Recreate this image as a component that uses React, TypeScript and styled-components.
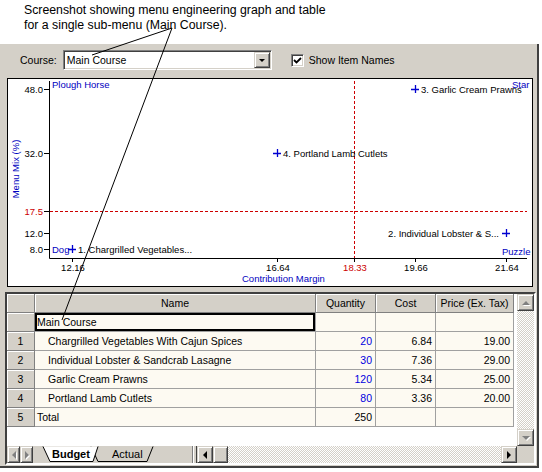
import React from 'react';
import styled, { createGlobalStyle } from 'styled-components';

// Global reset
const GlobalStyle = createGlobalStyle`
  html, body {
    margin: 0;
    padding: 0;
    background: #fff;
  }
  body {
    font-family: "Liberation Sans", Arial, sans-serif;
  }
`;

const FACE = '#d4d0c8';
const SHADOW = '#808080';
const DARK = '#404040';

// Data
interface MenuItem {
  id: number;
  name: string;
  qty: number;
  cost: string;
  price: string;
  label: string;
  margin: number;
  mix: number;
  side: 'left' | 'right';
}

const items: MenuItem[] = [
  { id: 1, name: 'Chargrilled Vegetables With Cajun Spices', qty: 20, cost: '6.84', price: '19.00', label: '1. Chargrilled Vegetables...', margin: 12.16, mix: 8.0, side: 'right' },
  { id: 2, name: 'Individual Lobster & Sandcrab Lasagne', qty: 30, cost: '7.36', price: '29.00', label: '2. Individual Lobster & S...', margin: 21.64, mix: 12.0, side: 'left' },
  { id: 3, name: 'Garlic Cream Prawns', qty: 120, cost: '5.34', price: '25.00', label: '3. Garlic Cream Prawns', margin: 19.66, mix: 48.0, side: 'right' },
  { id: 4, name: 'Portland Lamb Cutlets', qty: 80, cost: '3.36', price: '20.00', label: '4. Portland Lamb Cutlets', margin: 16.64, mix: 32.0, side: 'right' },
];

const avgMargin = 18.33;
const avgMix = 17.5;
const xTicks = [12.16, 16.64, 18.33, 19.66, 21.64];
const yTicks = [48.0, 32.0, 17.5, 12.0, 8.0];

// chart scales, in page pixels
const sx = (v: number) => Math.round(72 + (v - 12.16) * 45.78);
const sy = (v: number) => Math.round(89 + (48 - v) * 4);

// Styles
const Page = styled.div`
  position: relative;
  width: 542px;
  height: 472px;
  background: #fff;
  overflow: hidden;
`;

const Caption = styled.div`
  height: 44px;
  box-sizing: border-box;
  padding: 3px 0 0 24px;
  font-size: 12.3px;
  line-height: 15px;
  color: #000;
`;

const Window = styled.div`
  width: 539px;
  height: 424px;
  box-sizing: border-box;
  background: ${FACE};
  border-right: 2px solid ${DARK};
  border-bottom: 2px solid ${DARK};
  display: flex;
  flex-direction: column;
  font-size: 10.5px;
  color: #000;
`;

const Toolbar = styled.div`
  height: 34px;
  flex: none;
  display: flex;
  align-items: center;
  padding: 0 0 2px 20px;
  box-sizing: border-box;
`;

const Label = styled.span`
  margin-right: 6px;
`;

const Combo = styled.div`
  width: 209px;
  height: 20px;
  box-sizing: border-box;
  display: flex;
  align-items: center;
  background: #fff;
  border: 1px solid;
  border-color: ${SHADOW} #fff #fff ${SHADOW};
  box-shadow: inset 1px 1px ${DARK}, inset -1px -1px ${FACE};
  padding: 1px;
`;

const ComboText = styled.span`
  flex: 1;
  padding-left: 2px;
`;

const RaisedButton = styled.div<{ $w?: number; $h?: number }>`
  box-sizing: border-box;
  width: ${({ $w }) => $w ?? 17}px;
  height: ${({ $h }) => ($h ? `${$h}px` : '100%')};
  flex: none;
  display: flex;
  align-items: center;
  justify-content: center;
  background: ${FACE};
  border: 1px solid;
  border-color: ${FACE} ${DARK} ${DARK} ${FACE};
  box-shadow: inset 1px 1px #fff, inset -1px -1px ${SHADOW};
`;

type Dir = 'up' | 'down' | 'left' | 'right';

const Arrow = styled.span<{ $dir: Dir; $off?: boolean; $size?: number }>`
  width: 0;
  height: 0;
  border-style: solid;
  ${({ $dir, $off, $size = 4 }) => {
    const c = $off ? SHADOW : '#000';
    const s = $size;
    if ($dir === 'up') return `border-width: 0 ${s}px ${s}px ${s}px; border-color: transparent transparent ${c} transparent;`;
    if ($dir === 'down') return `border-width: ${s}px ${s}px 0 ${s}px; border-color: ${c} transparent transparent transparent;`;
    if ($dir === 'left') return `border-width: ${s}px ${s}px ${s}px 0; border-color: transparent ${c} transparent transparent;`;
    return `border-width: ${s}px 0 ${s}px ${s}px; border-color: transparent transparent transparent ${c};`;
  }}
  ${({ $off }) => $off && `filter: drop-shadow(1px 1px 0 #fff);`}
`;

const CheckBox = styled.div`
  width: 13px;
  height: 13px;
  box-sizing: border-box;
  margin: 0 5px 0 19px;
  background: #fff;
  border: 1px solid;
  border-color: ${SHADOW} #fff #fff ${SHADOW};
  box-shadow: inset 1px 1px ${DARK}, inset -1px -1px ${FACE};
  display: flex;
  align-items: center;
  justify-content: center;
`;

const ChartBox = styled.div`
  margin-left: 7px;
  width: 526px;
  height: 209px;
  flex: none;
  box-sizing: border-box;
  border: 1px solid #000;
  background: #fff;
`;

const ChartSvg = styled.svg`
  display: block;
  text {
    font-family: "Liberation Sans", Arial, sans-serif;
    font-size: 9.5px;
  }
`;

const GridFrame = styled.div`
  margin: 5px 0 0 5px;
  width: 531px;
  height: 173px;
  box-sizing: border-box;
  border: 2px solid;
  border-color: ${DARK} #fff #fff ${DARK};
  display: grid;
  grid-template-columns: 510px 17px;
  grid-template-rows: 152px 17px;
`;

const TableArea = styled.div`
  background: #fff;
  overflow: hidden;
`;

const Table = styled.div`
  display: grid;
  grid-template-columns: 28px 281px 60px 60px 78px;
  grid-auto-rows: 19px;
  width: 507px;
`;

const HeadCell = styled.div`
  box-sizing: border-box;
  background: ${FACE};
  border-right: 1px solid ${SHADOW};
  border-bottom: 1px solid ${SHADOW};
  box-shadow: inset 1px 1px #fff;
  text-align: center;
  line-height: 18px;
  white-space: nowrap;
  overflow: hidden;
`;

const Cell = styled.div<{ $align?: 'left' | 'right'; $indent?: number; $blue?: boolean; $selected?: boolean }>`
  box-sizing: border-box;
  background: #fdfaf2;
  border-right: 1px solid #a0a0a0;
  border-bottom: 1px solid #a0a0a0;
  padding: 0 3px 0 ${({ $indent }) => $indent ?? 2}px;
  text-align: ${({ $align }) => $align ?? 'left'};
  color: ${({ $blue }) => ($blue ? '#0000e0' : '#000')};
  line-height: 18px;
  white-space: nowrap;
  overflow: hidden;
  ${({ $selected }) => $selected && `box-shadow: inset 0 0 0 2px #000;`}
`;

const VScroll = styled.div`
  display: flex;
  flex-direction: column;
`;

const Track = styled.div`
  flex: 1;
  background: repeating-conic-gradient(${FACE} 0 25%, #fff 0 50%) 0 0 / 2px 2px;
`;

const BottomBar = styled.div`
  display: flex;
  background: ${FACE};
`;

const NavButton = styled(RaisedButton)`
  width: 13px;
`;

const TabStrip = styled.svg`
  display: block;
  flex: none;
  text {
    font-family: "Liberation Sans", Arial, sans-serif;
    font-size: 11px;
  }
`;

const Splitter = styled.div`
  width: 5px;
  flex: none;
  box-sizing: border-box;
  border-left: 1px solid ${SHADOW};
  border-right: 1px solid ${DARK};
  box-shadow: inset 1px 0 #fff;
`;

const Corner = styled.div`
  background: ${FACE};
`;

const Overlay = styled.svg`
  position: absolute;
  left: 0;
  top: 0;
  pointer-events: none;
`;

// Chart
const Plus: React.FC<{ x: number; y: number }> = ({ x, y }) => (
  <path d={`M${x - 4} ${y + 0.5}H${x + 4}M${x + 0.5} ${y - 4}V${y + 4}`} stroke="#0000d0" strokeWidth={1.3} />
);

const Chart: React.FC = () => {
  const left = 49.5;
  const right = 527;
  const top = 81;
  const bottom = 258.5;
  const blue = '#0000c0';
  const red = '#cc0000';

  return (
    <ChartSvg width={524} height={207}>
      <g transform="translate(-8 -79)">
        {/* axes */}
        <path d={`M${left} ${top}V${bottom}H${right}`} stroke="#000" fill="none" />

        {/* averages */}
        <line x1={50} x2={right} y1={sy(avgMix) + 0.5} y2={sy(avgMix) + 0.5} stroke={red} strokeDasharray="3 2" />
        <line x1={sx(avgMargin) + 0.5} x2={sx(avgMargin) + 0.5} y1={top} y2={bottom} stroke={red} strokeDasharray="3 2" />

        {/* y ticks */}
        {yTicks.map((v) => (
          <g key={v}>
            <line x1={44} x2={49} y1={sy(v) + 0.5} y2={sy(v) + 0.5} stroke="#000" />
            <text x={43} y={sy(v) + 4} textAnchor="end" fill={v === avgMix ? red : '#000'}>
              {v.toFixed(1)}
            </text>
          </g>
        ))}

        {/* x ticks */}
        {xTicks.map((v) => (
          <g key={v}>
            <line x1={sx(v) + 0.5} x2={sx(v) + 0.5} y1={258} y2={262} stroke="#000" />
            <text x={sx(v) + 1} y={271} textAnchor="middle" fill={v === avgMargin ? red : '#000'}>
              {v.toFixed(2)}
            </text>
          </g>
        ))}

        {/* axis titles */}
        <text x={242} y={282} fill={blue}>Contribution Margin</text>
        <text x={19} y={169} fill={blue} textAnchor="middle" transform="rotate(-90 19 169)">
          Menu Mix (%)
        </text>

        {/* quadrants */}
        <text x={52} y={88} fill={blue}>Plough Horse</text>
        <text x={512} y={88} fill={blue}>Star</text>
        <text x={52} y={253} fill={blue}>Dog</text>
        <text x={502} y={255} fill={blue}>Puzzle</text>

        {/* points */}
        {items.map((it) => {
          const x = sx(it.margin);
          const y = sy(it.mix);
          return (
            <g key={it.id}>
              <Plus x={x} y={y} />
              <text
                x={it.side === 'right' ? x + 6 : x - 7}
                y={y + 4}
                textAnchor={it.side === 'right' ? 'start' : 'end'}
                fill="#000"
              >
                {it.label}
              </text>
            </g>
          );
        })}
      </g>
    </ChartSvg>
  );
};

// Tabs
const Tabs: React.FC = () => (
  <TabStrip width={159} height={17}>
    <path d="M58 0.5L65 15.5H114L120 0.5" fill={FACE} stroke="#000" />
    <text x={79} y={12}>Actual</text>
    <path d="M10 0.5L17 15.5H60L65 0.5" fill="#fff" stroke="#000" />
    <text x={19} y={12} fontWeight="bold">Budget</text>
  </TabStrip>
);

const App: React.FC = () => {
  const total = items.reduce((s, it) => s + it.qty, 0);

  return (
    <Page>
      <GlobalStyle />
      <Caption>
        Screenshot showing menu engineering graph and table
        <br />
        for a single sub-menu (Main Course).
      </Caption>

      <Window>
        <Toolbar>
          <Label>Course:</Label>
          <Combo>
            <ComboText>Main Course</ComboText>
            <RaisedButton $w={16} $h={16}>
              <Arrow $dir="down" $size={3.5} />
            </RaisedButton>
          </Combo>
          <CheckBox>
            <svg width={9} height={9} viewBox="0 0 9 9">
              <path d="M1 4L3.5 6.5L8 2" stroke="#000" strokeWidth={1.8} fill="none" />
            </svg>
          </CheckBox>
          <span>Show Item Names</span>
        </Toolbar>

        <ChartBox>
          <Chart />
        </ChartBox>

        <GridFrame>
          <TableArea>
            <Table>
              <HeadCell />
              <HeadCell>Name</HeadCell>
              <HeadCell>Quantity</HeadCell>
              <HeadCell>Cost</HeadCell>
              <HeadCell>Price (Ex. Tax)</HeadCell>

              <HeadCell />
              <Cell $selected>Main Course</Cell>
              <Cell />
              <Cell />
              <Cell />

              {items.map((it) => (
                <React.Fragment key={it.id}>
                  <HeadCell>{it.id}</HeadCell>
                  <Cell $indent={13}>{it.name}</Cell>
                  <Cell $align="right" $blue>{it.qty}</Cell>
                  <Cell $align="right">{it.cost}</Cell>
                  <Cell $align="right">{it.price}</Cell>
                </React.Fragment>
              ))}

              <HeadCell>5</HeadCell>
              <Cell>Total</Cell>
              <Cell $align="right">{total}</Cell>
              <Cell />
              <Cell />
            </Table>
          </TableArea>

          <VScroll>
            <RaisedButton $h={17}>
              <Arrow $dir="up" $off />
            </RaisedButton>
            <Track />
            <RaisedButton $h={17}>
              <Arrow $dir="down" $off />
            </RaisedButton>
          </VScroll>

          <BottomBar>
            <NavButton>
              <Arrow $dir="left" $off />
            </NavButton>
            <NavButton>
              <Arrow $dir="right" $off />
            </NavButton>
            <Tabs />
            <Splitter />
            <RaisedButton $w={16}>
              <Arrow $dir="left" />
            </RaisedButton>
            <RaisedButton $w={15} />
            <Track />
            <RaisedButton $w={16}>
              <Arrow $dir="right" />
            </RaisedButton>
          </BottomBar>
          <Corner />
        </GridFrame>
      </Window>

      {/* callout lines of the caption */}
      <Overlay width={542} height={472}>
        <line x1={172} y1={28} x2={92} y2={55} stroke="#000" />
        <line x1={172} y1={28} x2={62} y2={320} stroke="#000" />
      </Overlay>
    </Page>
  );
};

export default App;
